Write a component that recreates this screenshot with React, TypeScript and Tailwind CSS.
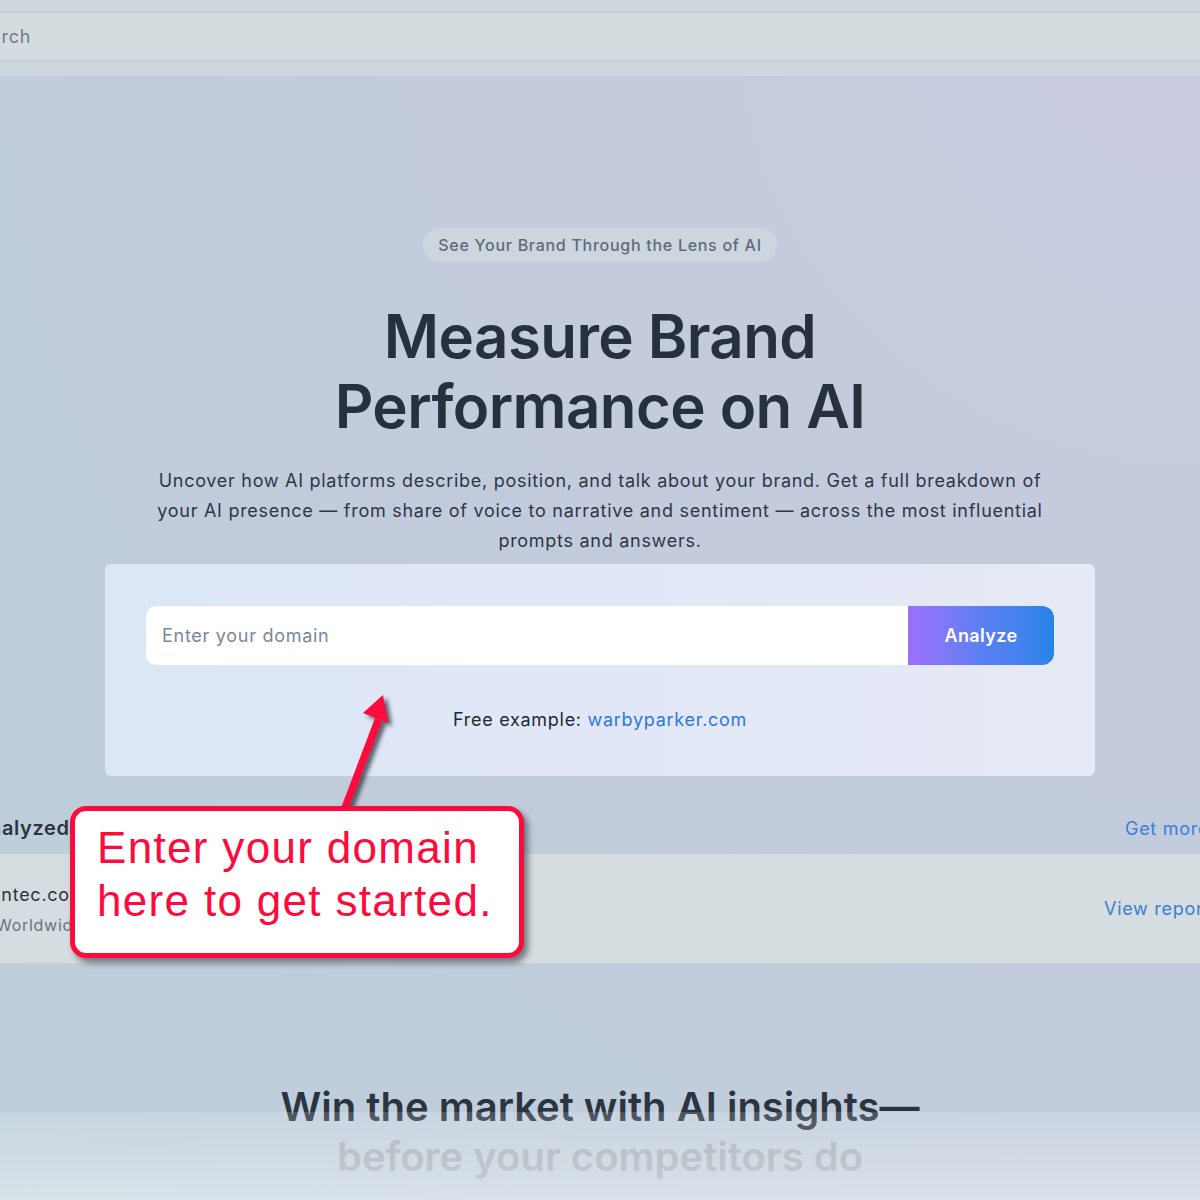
import React from 'react';

const recent = [{ domain: 'symantec.com', region: 'Worldwide' }];

function Callout() {
    return (
        <>
            <svg className="absolute left-[320px] top-[680px]" width="120" height="140" viewBox="0 0 120 140">
                <defs>
                    <filter id="arrowShadow" x="-50%" y="-50%" width="200%" height="200%">
                        <feGaussianBlur stdDeviation="2" />
                    </filter>
                </defs>
                <g transform="translate(4 3)" fill="#2a2f38" opacity="0.75" filter="url(#arrowShadow)">
                    <path d="M21 128 L55 38 L62 41 L28 130 Z" />
                    <path d="M63 15 L43 33 L68 43 Z" />
                </g>
                <g fill="#ff0a3c">
                    <path d="M21 128 L55 38 L62 41 L28 130 Z" />
                    <path d="M63 15 L43 33 L68 43 Z" />
                </g>
            </svg>
            <div className="absolute left-[70px] top-[806px] w-[454px] h-[152px] rounded-[16px] border-[5px] border-[#ff0a3c] bg-white pl-[22px] pt-[10px] shadow-[4px_5px_6px_rgba(30,36,48,0.55)]">
                <p className="font-['Liberation_Sans',Arial,sans-serif] text-[44px] leading-[53px] tracking-[0.03em] text-[#ff0a3c]">
                    Enter your domain
                    <br />
                    here to get started.
                </p>
            </div>
        </>
    );
}

export default function App() {
    return (
        <div className="relative w-[1200px] h-[1200px] overflow-hidden font-['Inter',sans-serif] tracking-[0.045em] bg-[radial-gradient(ellipse_at_top_right,#c9cbe0_0%,#c3cbdc_45%,#bdcfda_100%)]">
            {/* top search strip */}
            <div className="h-[12px] bg-[#cdd5dd]" />
            <div className="h-[49px] border-y border-[#bfcad4] bg-[#d5dcdf] flex items-center">
                <span className="-ml-[33px] text-[18px] text-[#727d8b]">Search</span>
            </div>
            <div className="h-[15px] bg-[#cdd5dd]" />

            {/* hero */}
            <div className="flex flex-col items-center pt-[152px]">
                <div className="h-[34px] px-[15px] flex items-center rounded-full bg-[#cdd6df] text-[16px] font-medium text-[#5f6b7a]">
                    See Your Brand Through the Lens of AI
                </div>
                <h1 className="mt-[39px] text-center text-[60px] leading-[70px] font-semibold tracking-[-0.01em] text-[#27313d]">
                    Measure Brand
                    <br />
                    Performance on AI
                </h1>
                <p className="mt-[25px] w-[900px] text-center text-[18px] leading-[30px] text-[#2d3745]">
                    Uncover how AI platforms describe, position, and talk about your brand. Get a full breakdown of your AI presence — from share of voice to narrative and sentiment — across the most influential prompts and answers.
                </p>
                <div className="mt-[8px] w-[990px] h-[212px] rounded-[6px] bg-gradient-to-r from-[#dbe7f5] via-[#e2e7f7] to-[#e6eaf6] px-[41px] pt-[42px]">
                    <div className="flex h-[59px]">
                        <div className="flex-1 flex items-center bg-white rounded-l-[10px] pl-[16px] text-[18px] text-[#7a8799]">
                            Enter your domain
                        </div>
                        <button className="w-[146px] rounded-r-[12px] bg-gradient-to-r from-[#9b6ffc] via-[#5a80f2] to-[#2484e8] text-[18px] font-semibold tracking-[0.02em] text-white">
                            Analyze
                        </button>
                    </div>
                    <p className="mt-[41px] text-center text-[18px] text-[#222a33]">
                        Free example: <span className="text-[#2a7ae0]">warbyparker.com</span>
                    </p>
                </div>
            </div>

            {/* recently analyzed */}
            <div className="mt-[28px] h-[50px] pb-[2px] flex items-center whitespace-nowrap">
                <div className="w-[1125px] shrink-0">
                    <span className="-ml-[118px] text-[20px] font-semibold tracking-[0.03em] text-[#2b3440]">Recently analyzed</span>
                </div>
                <span className="text-[18px] text-[#3a80d6]">Get more reports</span>
            </div>
            {recent.map((r) => (
                <div key={r.domain} className="h-[110px] border-b border-[#c8d0d5] bg-[#d5dde0] flex items-center whitespace-nowrap">
                    <div className="w-[1104px] shrink-0 flex flex-col">
                        <span className="-ml-[47px] text-[18px] leading-[28px] text-[#2b3440]">{r.domain}</span>
                        <span className="-ml-[4px] mt-[4px] text-[16px] text-[#6a7380]">{r.region}</span>
                    </div>
                    <span className="text-[18px] text-[#3a80d6]">View report</span>
                </div>
            ))}

            {/* next section */}
            <div className="pt-[118px] text-center text-[40px] leading-[50px] font-semibold tracking-normal">
                <p className="text-[#2b3440]">Win the market with AI insights—</p>
                <p className="text-[#a3acb5]">before your competitors do</p>
            </div>
            <div className="absolute left-0 bottom-0 w-full h-[88px] bg-gradient-to-b from-white/15 to-white/40" />

            <Callout />
        </div>
    );
}
